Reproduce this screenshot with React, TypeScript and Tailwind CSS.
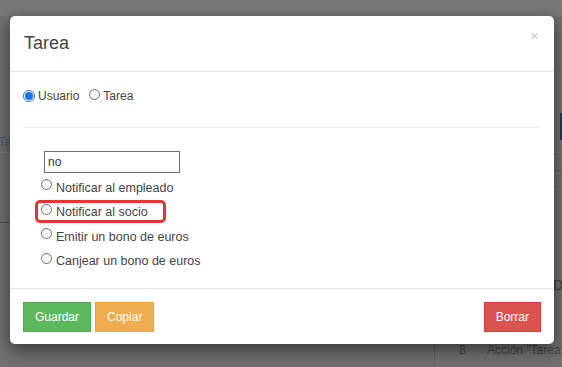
import React from "react";

const font = { fontFamily: '"Liberation Sans", Arial, sans-serif' };

function Radio({ checked = false }: { checked?: boolean }) {
  return checked ? (
    <span className="inline-flex items-center justify-center w-[12px] h-[12px] rounded-full border border-[#1a73e8] bg-white shrink-0">
      <span className="w-[8px] h-[8px] rounded-full bg-[#1a73e8]" />
    </span>
  ) : (
    <span className="inline-block w-[11px] h-[11px] rounded-full border border-[#6b6b6b] bg-white shrink-0" />
  );
}

const actions = [
  "Notificar al empleado",
  "Notificar al socio",
  "Emitir un bono de euros",
  "Canjear un bono de euros",
];

export default function App() {
  return (
    <div className="relative w-[562px] h-[367px] overflow-hidden bg-[#707070]" style={font}>
      {/* dimmed page behind the overlay */}
      <div className="absolute inset-0 pointer-events-none">
        <div className="absolute left-0 top-0 w-full h-[16px] bg-[#787878]" />
        <span className="absolute left-[-2px] top-[132px] text-[13px] text-[#4b5866]">Ta</span>
        <div className="absolute left-0 top-[152px] w-[12px] h-px bg-[#7a7a7a]" />
        <div className="absolute left-0 top-[222px] w-[12px] h-px bg-[#555]" />
        <div className="absolute left-[560px] top-[113px] w-[2px] h-[27px] bg-[#1d3a55]" />
        <div className="absolute left-[554px] top-[152px] w-[8px] h-px bg-[#7c7c7c]" />
        <div className="absolute left-[554px] top-[170px] w-[8px] h-px bg-[#5c5c5c]" />
        <div className="absolute left-[554px] top-[188px] w-[8px] h-px bg-[#7c7c7c]" />
        <span className="absolute left-[553px] top-[275px] text-[14px] text-[#3a3a3a]">D</span>
        <div className="absolute left-[434px] top-[344px] w-px h-[23px] bg-[#5e5e5e]" />
        <span className="absolute left-[459px] top-[341px] text-[12px] text-[#444]">8</span>
        <span className="absolute left-[487px] top-[341px] text-[12px] text-[#444] whitespace-nowrap">Acción "Tarea" (l</span>
      </div>

      {/* modal */}
      <div className="relative ml-[10px] mt-[16px] w-[544px] h-[328px] bg-white rounded-[5px] shadow-[0_5px_18px_rgba(0,0,0,0.55)] flex flex-col">
        <div className="h-[56px] border-b border-[#e5e5e5] pl-[14px] pr-[15px] flex items-center justify-between">
          <span className="text-[18px] text-[#444]">Tarea</span>
          <span className="text-[15px] leading-none text-[#c8c8c8] -mt-[16px]">×</span>
        </div>

        <div className="h-[216px] pl-[13px] pr-[13px] pt-[18px]">
          <div className="flex items-center h-[12px] text-[12px] text-[#444]">
            <Radio checked />
            <span className="ml-[3px]">Usuario</span>
            <span className="ml-[10px]"><Radio /></span>
            <span className="ml-[3px]">Tarea</span>
          </div>
          <div className="mt-[25px] h-px bg-[#eeeeee]" />

          <div className="pl-[21px] mt-[23px]">
            <div className="w-[136px] h-[22px] border border-[#6f6f6f] flex items-center pl-[3px] text-[12px] text-[#333]">
              no
            </div>
          </div>

          <div className="pl-[18px] mt-[3px]">
            {actions.map((a, i) => (
              <div key={a} className="relative flex items-center h-[24.5px] text-[12.5px] text-[#444]">
                <span className="-mt-[3px]"><Radio /></span>
                <span className="ml-[4px]">{a}</span>
                {i === 1 && (
                  <span className="absolute left-[-6px] top-[-1px] w-[131px] h-[23px] border-[3px] border-[#e2392f] rounded-[5px]" />
                )}
              </div>
            ))}
          </div>
        </div>

        <div className="border-t border-[#e5e5e5] flex-1 pt-[13px] pl-[13px] pr-[13px] flex items-start">
          <button className="h-[30px] px-[11px] bg-[#5cb85c] border border-[#4cae4c] text-white text-[12px]">Guardar</button>
          <button className="ml-[4px] h-[30px] px-[11px] bg-[#f0ad4e] border border-[#eea236] text-white text-[12px]">Copiar</button>
          <button className="ml-auto h-[30px] px-[11px] bg-[#d9534f] border border-[#d43f3a] text-white text-[12px]">Borrar</button>
        </div>
      </div>
    </div>
  );
}
